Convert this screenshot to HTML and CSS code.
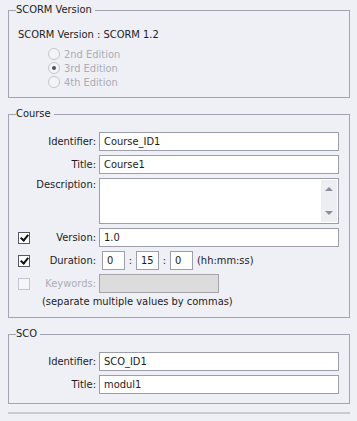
FILE: index.html
```html
<!DOCTYPE html>
<html lang="en">
<head>
    <meta charset="UTF-8">
    <title>SCORM Settings</title>
    <link rel="stylesheet" href="styles.css">
</head>
<body>
    <fieldset class="group scorm">
        <legend>SCORM Version</legend>
        <p class="version-text">SCORM Version : SCORM 1.2</p>
        <div class="radios">
            <div class="radio"><span class="dot"></span>2nd Edition</div>
            <div class="radio checked"><span class="dot"></span>3rd Edition</div>
            <div class="radio"><span class="dot"></span>4th Edition</div>
        </div>
    </fieldset>

    <fieldset class="group course">
        <legend>Course</legend>
        <div class="row">
            <span class="check-col"></span>
            <label class="label">Identifier:</label>
            <div class="field">Course_ID1</div>
        </div>
        <div class="row">
            <span class="check-col"></span>
            <label class="label">Title:</label>
            <div class="field">Course1</div>
        </div>
        <div class="row top">
            <span class="check-col"></span>
            <label class="label">Description:</label>
            <div class="field area">
                <div class="scrollbar">
                    <span class="arrow up"></span>
                    <span class="arrow down"></span>
                </div>
            </div>
        </div>
        <div class="row">
            <span class="check-col"><span class="checkbox on"></span></span>
            <label class="label">Version:</label>
            <div class="field">1.0</div>
        </div>
        <div class="row">
            <span class="check-col"><span class="checkbox on"></span></span>
            <label class="label">Duration:</label>
            <div class="duration">
                <div class="field small">0</div>
                <span class="sep">:</span>
                <div class="field small">15</div>
                <span class="sep">:</span>
                <div class="field small">0</div>
                <span class="hint">(hh:mm:ss)</span>
            </div>
        </div>
        <div class="row">
            <span class="check-col"><span class="checkbox off"></span></span>
            <label class="label disabled">Keywords:</label>
            <div class="field keywords"></div>
        </div>
        <p class="note">(separate multiple values by commas)</p>
    </fieldset>

    <fieldset class="group sco">
        <legend>SCO</legend>
        <div class="row">
            <span class="check-col"></span>
            <label class="label">Identifier:</label>
            <div class="field">SCO_ID1</div>
        </div>
        <div class="row">
            <span class="check-col"></span>
            <label class="label">Title:</label>
            <div class="field">modul1</div>
        </div>
    </fieldset>

    <div class="bottom-line"></div>
</body>
</html>
```

FILE: styles.css
```css
body {
    margin: 0;
    padding-top: 3px;
    background: #eff0f6;
    color: #1c1c1c;
    font-family: 'DejaVu Sans Condensed', 'DejaVu Sans', sans-serif;
    font-size: 11px;
    width: 357px;
    height: 421px;
    overflow: hidden;
}

.group {
    margin: 0 7px 0 8px;
    padding: 0 10px 0 9px;
    border: 1px solid #a2a4b4;
    min-width: 0;
    box-sizing: border-box;
}

.group legend {
    margin-left: -2px;
    padding: 0 3px 0 0;
    line-height: 14px;
}

/* SCORM version */
.scorm {
    height: 95px;
}

.version-text {
    margin: 11px 0 0;
    line-height: 14px;
}

.radios {
    margin: 5px 0 0 30px;
}

.radio {
    display: flex;
    align-items: center;
    gap: 4px;
    height: 14px;
    color: #abacb5;
}

.dot {
    width: 12px;
    height: 12px;
    box-sizing: border-box;
    border: 1px solid #c4c5cd;
    border-radius: 50%;
    background: #f4f4f7;
    position: relative;
}

.radio.checked .dot::after {
    content: "";
    position: absolute;
    left: 3px;
    top: 3px;
    width: 4px;
    height: 4px;
    border-radius: 50%;
    background: #505159;
}

/* course and sco */
.course {
    margin-top: 9px;
    padding-top: 11px;
    height: 211px;
}

.sco {
    margin-top: 9px;
    padding-top: 11px;
    height: 77px;
}

.row {
    display: flex;
    align-items: center;
    margin-bottom: 4px;
}

.row.top {
    align-items: flex-start;
}

.check-col {
    width: 13px;
    display: flex;
}

.label {
    width: 68px;
    box-sizing: border-box;
    text-align: right;
    padding-right: 3px;
    white-space: nowrap;
}

.label.disabled {
    color: #abacb5;
}

.field {
    flex: 1;
    height: 19px;
    box-sizing: border-box;
    border: 1px solid #9c9eae;
    background: #fff;
    padding: 0 4px;
    line-height: 17px;
}

.field.area {
    height: 46px;
    position: relative;
}

.scrollbar {
    position: absolute;
    right: 1px;
    top: 1px;
    bottom: 1px;
    width: 16px;
    background: #eceef2;
}

.arrow {
    position: absolute;
    left: 4px;
    width: 0;
    height: 0;
    border-left: 4px solid transparent;
    border-right: 4px solid transparent;
}

.arrow.up {
    top: 7px;
    border-bottom: 4px solid #8c8e9a;
}

.arrow.down {
    bottom: 7px;
    border-top: 4px solid #8c8e9a;
}

.checkbox {
    width: 12px;
    height: 12px;
    box-sizing: border-box;
    border: 1px solid #55586a;
    background: #fff;
    position: relative;
}

.checkbox.on::after {
    content: "";
    position: absolute;
    left: 3px;
    top: 0;
    width: 3px;
    height: 6px;
    border: solid #111;
    border-width: 0 2px 2px 0;
    transform: rotate(40deg);
}

.checkbox.off {
    border-color: #c3c5d0;
    background: #f6f6f8;
}

.duration {
    flex: 1;
    display: flex;
    align-items: center;
    padding-left: 3px;
}

.field.small {
    flex: none;
    width: 23px;
}

.sep {
    width: 11px;
    text-align: center;
}

.hint {
    margin-left: 4px;
}

.field.keywords {
    flex: none;
    width: 120px;
    background: #dcdcdc;
    border-color: #a4a4aa;
}

.note {
    margin: -2px 0 0 24px;
    line-height: 14px;
}

.bottom-line {
    margin: 8px 7px 0 8px;
    height: 2px;
    background: #c9cad2;
}
```
